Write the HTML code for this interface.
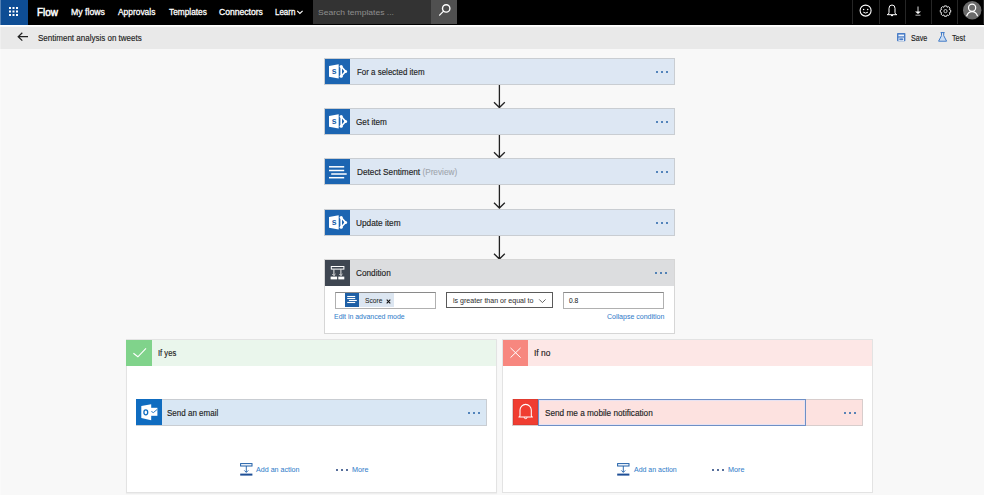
<!DOCTYPE html>
    <html><head><meta charset="utf-8">
    <style>
    *{margin:0;padding:0;box-sizing:border-box}
html,body{width:984px;height:495px;overflow:hidden;background:#f8f8f8;font-family:"Liberation Sans",sans-serif;color:#222}
.abs{position:absolute}
.tx{position:absolute;white-space:nowrap;transform-origin:0 0;-webkit-text-stroke:0.25px currentColor}
#top{position:absolute;left:0;top:0;width:984px;height:25px;background:#000}
#waffle{position:absolute;left:0;top:0;width:28px;height:25px;background:#0e4d94}
#search{position:absolute;left:313px;top:0;width:118px;height:24px;background:#333}
#sbtn{position:absolute;left:431px;top:0;width:26px;height:24px;background:#505050}
.sep{position:absolute;top:0;width:1px;height:24px;background:#262626}
#bar{position:absolute;left:0;top:27px;width:984px;height:22px;background:#e9e9e9}
#white{position:absolute;left:0;top:25px;width:984px;height:2px;background:linear-gradient(#fff 0,#fff 60%,#f4f4f4 100%)}
.card{position:absolute;border:1px solid #c9cdd2;background:#dde7f3;height:27px}
.card .ic{position:absolute;left:0;top:0;width:25px;height:25px;background:#1c65b2}
.dots{position:absolute;top:12px;width:12px;height:2px}
.dots i{position:absolute;top:0;width:2px;height:2px;border-radius:1px;background:#2463a9}
.arrow{position:absolute;left:493px;width:13px;height:24px}
.ldots{position:absolute;width:12px;height:2px}
.ldots i{position:absolute;top:0;width:2px;height:2px;background:#1f3f7a;border-radius:1px}

    </style></head><body>
    
<svg width="0" height="0" style="position:absolute"><defs>
<g id="spicon">
<path d="M16.2 7.5 L20.6 12.4 L16.2 17.3 Z" fill="none" stroke="#fff" stroke-width="1.6" stroke-linejoin="round"/>
<circle cx="16.2" cy="7.5" r="1.55" fill="#fff"/><circle cx="20.6" cy="12.4" r="1.5" fill="#fff"/><circle cx="16.2" cy="17.3" r="1.55" fill="#fff"/>
<path d="M4 7.1 L13.7 5.2 L13.7 19.5 L4 17.7 Z" fill="#fff"/>
<text x="9.1" y="15.4" font-family="Liberation Sans" font-weight="bold" font-size="8.6" fill="#1c5fa8" text-anchor="middle">s</text>
</g>
</defs></svg>
<div id="top"></div>
<div id="waffle"><svg width="28" height="25" viewBox="0 0 28 25">
<g fill="#fff">
<rect x="9" y="7" width="2" height="2"/><rect x="12.5" y="7" width="2" height="2"/><rect x="16" y="7" width="2" height="2"/>
<rect x="9" y="10.5" width="2" height="2"/><rect x="12.5" y="10.5" width="2" height="2"/><rect x="16" y="10.5" width="2" height="2"/>
<rect x="9" y="14" width="2" height="2"/><rect x="12.5" y="14" width="2" height="2"/><rect x="16" y="14" width="2" height="2"/>
</g></svg></div>
<svg class="abs" style="left:296px;top:9px" width="8" height="6" viewBox="0 0 8 6"><path d="M1.2 1.8 L3.9 4.5 L6.6 1.8" fill="none" stroke="#fff" stroke-width="1.1"/></svg>
<div id="search"></div>
<div id="sbtn"><svg width="26" height="24" viewBox="0 0 26 24"><circle cx="15.2" cy="8.4" r="3.7" fill="none" stroke="#fff" stroke-width="1.4"/><path d="M12.6 11.1 L8.6 15.1" stroke="#fff" stroke-width="1.3" stroke-linecap="round"/></svg></div>
<div class="sep" style="left:852px"></div>
<div class="sep" style="left:879px"></div>
<div class="sep" style="left:905px"></div>
<div class="sep" style="left:931px"></div>
<div class="sep" style="left:957px"></div>
<!-- smiley -->
<svg class="abs" style="left:858px;top:3px" width="16" height="16" viewBox="0 0 16 16"><circle cx="7.6" cy="7.6" r="5.5" fill="none" stroke="#fff" stroke-width="1.1"/><circle cx="5.6" cy="6.4" r="0.75" fill="#fff"/><circle cx="9.7" cy="6.4" r="0.75" fill="#fff"/><path d="M5.3 9.2 Q7.6 11 9.9 9.2" fill="none" stroke="#fff" stroke-width="1"/></svg>
<!-- bell -->
<svg class="abs" style="left:885px;top:3px" width="14" height="15" viewBox="0 0 14 15"><path d="M2.2 11.7 Q4 11.2 4 9.5 L4 5.3 Q4 2 7 2 Q10 2 10 5.3 L10 9.5 Q10 11.2 11.8 11.7 Z" fill="none" stroke="#fff" stroke-width="1" stroke-linejoin="round"/><path d="M5.8 12 A1.2 1.2 0 0 0 8.2 12 Z" fill="#fff"/></svg>
<!-- download -->
<svg class="abs" style="left:912px;top:5px" width="12" height="12" viewBox="0 0 12 12"><path d="M6 1.5 L6 8" stroke="#ddd" stroke-width="1"/><path d="M3 6.5 L6 9 L9 6.5 Z" fill="#fff"/><path d="M3.5 10.2 L8.5 10.2" stroke="#bbb" stroke-width="1"/></svg>
<!-- gear -->
<svg class="abs" style="left:938px;top:4px" width="15" height="15" viewBox="0 0 15 15"><path d="M6.4 1.9 L8.6 1.9 L9.1 3.3 L10.5 2.6 L12 4.1 L11.3 5.5 L12.7 6 L12.7 8.2 L11.3 8.7 L12 10.1 L10.5 11.6 L9.1 10.9 L8.6 12.3 L6.4 12.3 L5.9 10.9 L4.5 11.6 L3 10.1 L3.7 8.7 L2.3 8.2 L2.3 6 L3.7 5.5 L3 4.1 L4.5 2.6 L5.9 3.3 Z" fill="none" stroke="#e6e6e6" stroke-width="1" stroke-linejoin="round"/><circle cx="7.5" cy="7.1" r="1.6" fill="none" stroke="#ddd" stroke-width="0.9"/></svg>
<!-- avatar -->
<svg class="abs" style="left:962px;top:0px" width="21" height="21" viewBox="0 0 21 21"><circle cx="10.2" cy="10.2" r="9.2" fill="#6b6b6b"/><circle cx="10.1" cy="7.7" r="3.6" fill="none" stroke="#fff" stroke-width="1.2"/><path d="M4.6 16.2 Q6.2 11.6 10.1 11.6 Q14 11.6 15.6 16.2" fill="none" stroke="#fff" stroke-width="1.2"/></svg>
<div class="sep" style="left:983px"></div>

<div id="white"></div>
<div id="bar"></div>
<svg class="abs" style="left:16px;top:31px" width="14" height="12" viewBox="0 0 14 12"><path d="M2.2 5.7 L12 5.7 M6.3 1.8 L2.2 5.7 L6.3 9.6" fill="none" stroke="#222" stroke-width="1.25"/></svg>
<!-- save -->
<svg class="abs" style="left:897px;top:32.5px" width="9" height="9" viewBox="0 0 9 9"><rect x="0" y="0" width="8.4" height="8.3" rx="0.7" fill="#4a7dc6"/><rect x="1.4" y="1.6" width="5.6" height="1.7" fill="#f2f6fc"/><rect x="1.9" y="5" width="4.7" height="2.6" fill="none" stroke="#eef3fb" stroke-width="0.8"/><rect x="3.6" y="5.8" width="1.3" height="1.3" fill="#4a7dc6"/></svg>
<svg class="abs" style="left:938px;top:32px" width="10" height="10" viewBox="0 0 10 10"><path d="M3.6 3.8 L1.2 8.6 L8 8.6 L5.6 3.8 Z" fill="#c9dcf3"/><path d="M2.6 0.6 L6.6 0.6 M3.5 0.6 L3.5 3.6 L0.6 9.2 L8.6 9.2 L5.7 3.6 L5.7 0.6" fill="none" stroke="#3b78c8" stroke-width="1" stroke-linejoin="round"/></svg>

<!-- cards -->
<div class="card" style="left:324px;top:58px;width:351px">
 <div class="ic"><svg width="25" height="25" viewBox="0 0 25 25"><use href="#spicon"/></svg></div>
  <div class="dots" style="left:330.7px"><i style="left:0"></i><i style="left:5px"></i><i style="left:10px"></i></div>
</div>
<svg class="arrow" style="top:85px" width="13" height="24" viewBox="0 0 13 24"><path d="M6.4 0 L6.4 22.5 M1 17.2 L6.4 22.5 L11.8 17.2" fill="none" stroke="#222" stroke-width="1.3"/></svg>
<div class="card" style="left:324px;top:108px;width:351px">
 <div class="ic"><svg width="25" height="25" viewBox="0 0 25 25"><use href="#spicon"/></svg></div>
  <div class="dots" style="left:330.7px"><i style="left:0"></i><i style="left:5px"></i><i style="left:10px"></i></div>
</div>
<svg class="arrow" style="top:135px" width="13" height="24" viewBox="0 0 13 24"><path d="M6.4 0 L6.4 22.5 M1 17.2 L6.4 22.5 L11.8 17.2" fill="none" stroke="#222" stroke-width="1.3"/></svg>
<div class="card" style="left:324px;top:158px;width:351px">
 <div class="ic"><svg width="25" height="25" viewBox="0 0 25 25"><g stroke="#fff" stroke-width="1.5"><path d="M4 7.8 L19.2 7.8"/><path d="M4 11.5 L19.2 11.5"/><path d="M6.2 15 L21.7 15"/><path d="M4 18.7 L19.2 18.7"/></g></svg></div>
  <div class="dots" style="left:330.7px"><i style="left:0"></i><i style="left:5px"></i><i style="left:10px"></i></div>
</div>
<svg class="arrow" style="top:185px" width="13" height="24" viewBox="0 0 13 24"><path d="M6.4 0 L6.4 23 M1 17.7 L6.4 23 L11.8 17.7" fill="none" stroke="#222" stroke-width="1.3"/></svg>
<div class="card" style="left:324px;top:208.5px;width:351px">
 <div class="ic"><svg width="25" height="25" viewBox="0 0 25 25"><use href="#spicon"/></svg></div>
  <div class="dots" style="left:330.7px"><i style="left:0"></i><i style="left:5px"></i><i style="left:10px"></i></div>
</div>
<svg class="arrow" style="top:235.5px" width="13" height="24" viewBox="0 0 13 24"><path d="M6.4 0 L6.4 23 M1 17.7 L6.4 23 L11.8 17.7" fill="none" stroke="#222" stroke-width="1.3"/></svg>

<!-- condition -->
<div class="abs" style="left:324px;top:259px;width:351px;height:75px;border:1px solid #d6d6d6;background:#fff"></div>
<div class="abs" style="left:325px;top:260px;width:349px;height:25.5px;background:#dcdddf"></div>
<div class="abs" style="left:325px;top:260px;width:25px;height:25.5px;background:#3e4651">
<svg width="25" height="25" viewBox="0 0 25 25"><rect x="6.3" y="6.5" width="12.6" height="2.6" fill="none" stroke="#fff" stroke-width="1"/><g stroke="#e8e8e8" stroke-width="1"><path d="M8.9 9.2 L8.9 15.4 M15.9 9.2 L15.9 15.4"/><path d="M7.3 14 L8.9 15.6 L10.5 14 M14.3 14 L15.9 15.6 L17.5 14" fill="none" stroke-width="0.9"/></g><rect x="5.6" y="16.6" width="6.5" height="2.8" fill="#fff"/><rect x="13.3" y="16.6" width="6" height="2.8" fill="#fff"/></svg>
</div>
<div class="dots" style="left:655px;top:272px"><i style="left:0"></i><i style="left:5px"></i><i style="left:10px"></i></div>

<div class="abs" style="left:335px;top:292px;width:101px;height:17px;border:1px solid #b0b0b0;border-top-color:#8a8a8a;background:#fff"></div>
<div class="abs" style="left:345px;top:293px;width:14px;height:14px;background:#1d5fa6"><svg width="14" height="14" viewBox="0 0 14 14"><g stroke="#fff" stroke-width="1.1"><path d="M2.2 3.5 L10.2 3.5"/><path d="M2.2 5.5 L10.2 5.5"/><path d="M3.9 7.5 L11.8 7.5"/><path d="M2.2 9.5 L10.2 9.5"/></g></svg></div>
<div class="abs" style="left:359px;top:293px;width:35px;height:14px;background:#dce6f1"></div>
<svg class="abs" style="left:385.5px;top:298.5px" width="5" height="5" viewBox="0 0 5 5"><path d="M0.7 0.7 L4.3 4.3 M4.3 0.7 L0.7 4.3" stroke="#111" stroke-width="1.1"/></svg>

<div class="abs" style="left:446px;top:292px;width:107px;height:16px;border:1.3px solid #5a5a5a;background:#fff"></div>
<svg class="abs" style="left:538px;top:298px" width="9" height="6" viewBox="0 0 9 6"><path d="M1.2 1.4 L4.4 4.6 L7.6 1.4" fill="none" stroke="#555" stroke-width="0.9"/></svg>

<div class="abs" style="left:563px;top:292px;width:101px;height:17px;border:1px solid #b0b0b0;border-top-color:#8a8a8a;background:#fff"></div>


<!-- If yes -->
<div class="abs" style="left:126px;top:339px;width:371px;height:154px;border:1px solid #e3e3e3;background:#fff;box-shadow:0 1px 1px rgba(0,0,0,0.04)"></div>
<div class="abs" style="left:127px;top:340px;width:369px;height:25.5px;background:#eaf6ec"></div>
<div class="abs" style="left:126px;top:340px;width:26px;height:25.5px;background:#80d38b"><svg width="26" height="25" viewBox="0 0 26 25"><path d="M7.4 13.2 L11.9 16.8 L20 8.3" fill="none" stroke="#fff" stroke-width="1.1"/></svg></div>

<div class="card" style="left:136px;top:399px;width:351px;background:#d9e7f4">
 <div class="ic" style="background:#0f6cc0;left:-1px;top:-1px;width:26px;height:26px"><svg width="26" height="26" viewBox="0 0 26 26">
<rect x="15" y="8.8" width="6.4" height="8" fill="#fff"/>
<path d="M15.2 12.4 L17.4 13.6 L21.2 10.4" fill="none" stroke="#0f6cc0" stroke-width="0.9"/>
<path d="M5.3 7 L15.2 5.2 L15.2 21.2 L5.3 19.1 Z" fill="#fff"/>
<ellipse cx="9.8" cy="13.3" rx="1.9" ry="2.5" fill="none" stroke="#0f6cc0" stroke-width="1.3"/>
</svg></div>
  <div class="dots" style="left:330.7px"><i style="left:0"></i><i style="left:5px"></i><i style="left:10px"></i></div>
</div>

<!-- If no -->
<div class="abs" style="left:502px;top:339px;width:371px;height:154px;border:1px solid #e3e3e3;background:#fff"></div>
<div class="abs" style="left:503px;top:340px;width:369px;height:25.5px;background:#fde7e6"></div>
<div class="abs" style="left:503px;top:340px;width:25px;height:25.5px;background:#f7877f"><svg width="25" height="25" viewBox="0 0 25 25"><path d="M7.5 7.9 L17.6 17.6 M17.6 7.9 L7.5 17.6" fill="none" stroke="#fff" stroke-width="1"/></svg></div>

<div class="card" style="left:512px;top:399px;width:351px;background:#fde2e0;border-color:#d8cdcc">
 <div class="ic" style="background:#f03d31;left:0;top:-1px;width:25px;height:26px;box-shadow:inset 0 0 0 0.6px #d23a31"><svg width="25" height="26" viewBox="0 0 25 26">
<path d="M7 16.4 L7 11 A5.65 5.65 0 0 1 18.3 11 L18.3 16.4 Q18.3 17.6 19.4 18 L5.9 18 Q7 17.6 7 16.4 Z" fill="none" stroke="#fff" stroke-width="1.05" stroke-linejoin="round"/>
<path d="M11.2 18.2 A1.45 1.45 0 0 0 14.1 18.2" fill="none" stroke="#fff" stroke-width="1"/>
</svg></div>
 <div class="abs" style="left:25px;top:-1px;width:268px;height:27px;border:1px solid #6f8fc5;border-right-width:1.3px;box-shadow:inset 0 0 0 1px #e6e2f2"></div>
  <div class="dots" style="left:330.7px"><i style="left:0"></i><i style="left:5px"></i><i style="left:10px"></i></div>
</div>

<!-- add action -->
<svg class="abs" style="left:239px;top:462px" width="15" height="15" viewBox="0 0 15 15"><g fill="none" stroke="#1f5fa8"><rect x="1.6" y="1.6" width="11.4" height="2.4" stroke-width="1"/><path d="M7.3 4 L7.3 10.2 M5.3 8.4 L7.3 10.4 L9.3 8.4" stroke-width="0.9"/></g><rect x="1.2" y="11.6" width="12.2" height="2" fill="#1f4f96"/></svg>
<div class="ldots" style="left:336px;top:468.5px"><i style="left:0"></i><i style="left:5px"></i><i style="left:10px"></i></div>

<svg class="abs" style="left:615.5px;top:462px" width="15" height="15" viewBox="0 0 15 15"><g fill="none" stroke="#1f5fa8"><rect x="1.6" y="1.6" width="11.4" height="2.4" stroke-width="1"/><path d="M7.3 4 L7.3 10.2 M5.3 8.4 L7.3 10.4 L9.3 8.4" stroke-width="0.9"/></g><rect x="1.2" y="11.6" width="12.2" height="2" fill="#1f4f96"/></svg>
<div class="ldots" style="left:712px;top:468.5px"><i style="left:0"></i><i style="left:5px"></i><i style="left:10px"></i></div>
<div class="abs" style="left:0;top:0;width:1px;height:495px;background:rgba(255,255,255,0.3)"></div>

    <div class="tx" style="left:37.15px;top:7px;font-size:10.5px;line-height:10.5px;color:#fff;transform:scaleX(0.949);-webkit-text-stroke:0.5px #fff">Flow</div>
<div class="tx" style="left:70.83px;top:8px;font-size:9px;line-height:9px;color:#fff;transform:scaleX(0.968);-webkit-text-stroke:0.3px #fff">My flows</div>
<div class="tx" style="left:117.50px;top:8px;font-size:9px;line-height:9px;color:#fff;transform:scaleX(0.933);-webkit-text-stroke:0.3px #fff">Approvals</div>
<div class="tx" style="left:168.70px;top:8px;font-size:9px;line-height:9px;color:#fff;transform:scaleX(0.922);-webkit-text-stroke:0.3px #fff">Templates</div>
<div class="tx" style="left:218.60px;top:8px;font-size:9px;line-height:9px;color:#fff;transform:scaleX(0.954);-webkit-text-stroke:0.3px #fff">Connectors</div>
<div class="tx" style="left:274.92px;top:8px;font-size:9px;line-height:9px;color:#fff;transform:scaleX(0.883);-webkit-text-stroke:0.3px #fff">Learn</div>
<div class="tx" style="left:318.33px;top:9px;font-size:8px;line-height:8px;color:#8c8c8c;transform:scaleX(1.068);-webkit-text-stroke:0.05px #8c8c8c">Search templates ...</div>
<div class="tx" style="left:37.51px;top:34px;font-size:9px;line-height:9px;color:#222;transform:scaleX(0.890);-webkit-text-stroke:0.15px #222">Sentiment analysis on tweets</div>
<div class="tx" style="left:910.61px;top:34px;font-size:9px;line-height:9px;color:#222;transform:scaleX(0.795);-webkit-text-stroke:0.15px #222">Save</div>
<div class="tx" style="left:952.40px;top:34px;font-size:9px;line-height:9px;color:#222;transform:scaleX(0.799);-webkit-text-stroke:0.15px #222">Test</div>
<div class="tx" style="left:356.67px;top:68px;font-size:8.5px;line-height:8.5px;color:#1e1e1e;transform:scaleX(0.934);-webkit-text-stroke:0.15px #1e1e1e">For a selected item</div>
<div class="tx" style="left:356.40px;top:118px;font-size:8.5px;line-height:8.5px;color:#1e1e1e;transform:scaleX(0.962);-webkit-text-stroke:0.15px #1e1e1e">Get item</div>
<div class="tx" style="left:356.83px;top:168px;font-size:8.5px;line-height:8.5px;color:#1e1e1e;transform:scaleX(0.968);-webkit-text-stroke:0.15px #1e1e1e">Detect Sentiment <span style="color:#a0a6ad;-webkit-text-stroke:0.1px #a0a6ad">(Preview)</span></div>
<div class="tx" style="left:356.33px;top:219px;font-size:8.5px;line-height:8.5px;color:#1e1e1e;transform:scaleX(0.973);-webkit-text-stroke:0.15px #1e1e1e">Update item</div>
<div class="tx" style="left:356.30px;top:269px;font-size:8.5px;line-height:8.5px;color:#1e1e1e;transform:scaleX(0.967);-webkit-text-stroke:0.15px #1e1e1e">Condition</div>
<div class="tx" style="left:364.71px;top:297px;font-size:7.5px;line-height:7.5px;color:#222;transform:scaleX(0.890);-webkit-text-stroke:0.05px #222">Score</div>
<div class="tx" style="left:452.60px;top:297px;font-size:7.5px;line-height:7.5px;color:#333;transform:scaleX(0.941);-webkit-text-stroke:0.05px #333">is greater than or equal to</div>
<div class="tx" style="left:569.00px;top:297px;font-size:7.5px;line-height:7.5px;color:#222;transform:scaleX(0.887);-webkit-text-stroke:0.05px #222">0.8</div>
<div class="tx" style="left:334.21px;top:313px;font-size:7px;line-height:7px;color:#3580cb;transform:scaleX(0.993);-webkit-text-stroke:0.05px #3580cb">Edit in advanced mode</div>
<div class="tx" style="left:607.40px;top:313px;font-size:7px;line-height:7px;color:#3580cb;transform:scaleX(1.003);-webkit-text-stroke:0.05px #3580cb">Collapse condition</div>
<div class="tx" style="left:157.90px;top:349px;font-size:8.5px;line-height:8.5px;color:#1e1e1e;transform:scaleX(0.896);-webkit-text-stroke:0.15px #1e1e1e">If yes</div>
<div class="tx" style="left:534.41px;top:349px;font-size:8.5px;line-height:8.5px;color:#1e1e1e;transform:scaleX(0.989);-webkit-text-stroke:0.15px #1e1e1e">If no</div>
<div class="tx" style="left:167.46px;top:409px;font-size:8.5px;line-height:8.5px;color:#1e1e1e;transform:scaleX(0.943);-webkit-text-stroke:0.15px #1e1e1e">Send an email</div>
<div class="tx" style="left:544.83px;top:409px;font-size:8.5px;line-height:8.5px;color:#1e1e1e;transform:scaleX(0.966);-webkit-text-stroke:0.15px #1e1e1e">Send me a mobile notification</div>
<div class="tx" style="left:256.40px;top:466px;font-size:7px;line-height:7px;color:#3580cb;transform:scaleX(1.016);-webkit-text-stroke:0.05px #3580cb">Add an action</div>
<div class="tx" style="left:351.97px;top:466px;font-size:7px;line-height:7px;color:#3580cb;transform:scaleX(1.033);-webkit-text-stroke:0.05px #3580cb">More</div>
<div class="tx" style="left:633.60px;top:466px;font-size:7px;line-height:7px;color:#3580cb;transform:scaleX(0.998);-webkit-text-stroke:0.05px #3580cb">Add an action</div>
<div class="tx" style="left:728.47px;top:466px;font-size:7px;line-height:7px;color:#3580cb;transform:scaleX(1.027);-webkit-text-stroke:0.05px #3580cb">More</div>
    </body></html>
